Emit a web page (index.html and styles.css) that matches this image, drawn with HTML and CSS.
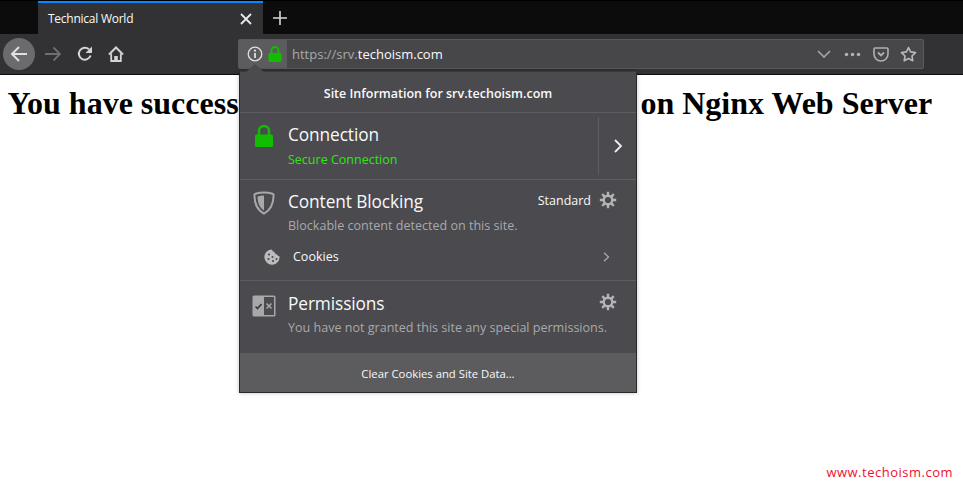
FILE: index.html
```html
<!DOCTYPE html>
<html lang="en">
<head>
<meta charset="utf-8">
<title>Technical World</title>
<link rel="stylesheet" href="styles.css">
</head>
<body>
<div class="browser">
  <header class="tabstrip">
    <div class="tab">
      <span class="tab-title">Technical World</span>
      <svg class="tab-close" width="14" height="14" viewBox="0 0 14 14"><path d="M2 2l10 10M12 2L2 12" stroke="#e8e8e8" stroke-width="1.8" fill="none"/></svg>
    </div>
    <svg class="newtab" width="16" height="16" viewBox="0 0 16 16"><path d="M8 1v14M1 8h14" stroke="#d8d8d8" stroke-width="1.6" fill="none"/></svg>
  </header>
  <nav class="toolbar">
    <div class="back">
      <svg width="20" height="20" viewBox="0 0 20 20"><path d="M18 10H3M10 3l-7 7 7 7" stroke="#e0e0e0" stroke-width="2" fill="none"/></svg>
    </div>
    <svg class="nav-icon forward" width="18" height="16" viewBox="0 0 18 16"><path d="M1 8h15M9.500 1.500L16 8l-6.500 6.500" stroke="#6f6f72" stroke-width="1.800" fill="none"/></svg>
    <svg class="nav-icon reload" width="16" height="16" viewBox="0 0 16 16"><path d="M13.600 9.500A6 6 0 1 1 12 3.300" stroke="#d4d4d5" stroke-width="2" fill="none"/><path d="M15 0.500v6.500h-6.500z" fill="#d4d4d5"/></svg>
    <svg class="nav-icon home" width="16" height="16" viewBox="0 0 16 16"><path d="M1 8.500l7-7 7 7" stroke="#d4d4d5" stroke-width="2" fill="none"/><path d="M3.200 7.500v7.500h9.600V7.500" stroke="#d4d4d5" stroke-width="1.800" fill="none"/><path d="M6.200 15v-5h3.600v5z" fill="#d4d4d5"/></svg>
    <div class="urlbar">
      <div class="identity">
        <svg width="16" height="16" viewBox="0 0 16 16"><circle cx="8" cy="8" r="6.800" stroke="#e0e0e0" stroke-width="1.300" fill="none"/><path d="M8 7v5" stroke="#e0e0e0" stroke-width="1.800"/><circle cx="8" cy="4.700" r="1.100" fill="#e0e0e0"/></svg>
        <svg width="14" height="16" viewBox="0 0 14 16"><path d="M3.500 7V4.500a3.500 3.500 0 0 1 7 0V7" stroke="#12bc00" stroke-width="2" fill="none"/><rect x="0.500" y="7" width="13" height="9" rx="1" fill="#12bc00"/></svg>
      </div>
      <div class="url"><span class="url-dim">https://srv.</span>techoism.com</div>
      <svg class="page-icon" width="14" height="8" viewBox="0 0 14 8"><path d="M1 1l6 6 6-6" stroke="#a3a3a4" stroke-width="1.700" fill="none"/></svg>
      <svg class="page-icon dots" width="17" height="5" viewBox="0 0 17 5"><circle cx="2.500" cy="2.500" r="1.800" fill="#b0b0b1"/><circle cx="8.500" cy="2.500" r="1.800" fill="#b0b0b1"/><circle cx="14.500" cy="2.500" r="1.800" fill="#b0b0b1"/></svg>
      <svg class="page-icon pocket" width="16" height="15" viewBox="0 0 16 15"><path d="M2 1h12a1 1 0 0 1 1 1v5a7 7 0 0 1-14 0V2a1 1 0 0 1 1-1z" stroke="#b0b0b1" stroke-width="1.600" fill="none"/><path d="M5 5.500l3 3 3-3" stroke="#b0b0b1" stroke-width="1.800" fill="none"/></svg>
      <svg class="page-icon star" width="17" height="16" viewBox="0 0 17 16"><path d="M8.500 1.500l2.100 4.400 4.900.7-3.500 3.400.8 4.800-4.300-2.300-4.300 2.300.8-4.800L1.500 6.600l4.900-.7z" stroke="#b8b8b9" stroke-width="1.600" fill="none" stroke-linejoin="round"/></svg>
    </div>
  </nav>
  <main class="content">
    <h1 class="headline">You have successfully enabled SSL Certificate on Nginx Web Server</h1>
    <div class="credit">www.techoism.com</div>
  </main>
</div>

<aside class="popup">
  <div class="popup-arrow"></div>
  <div class="popup-head">Site Information for srv.techoism.com</div>
  <section class="sec sec-conn">
    <div class="conn-main">
      <svg class="sec-icon" width="20" height="24" viewBox="0 0 20 24"><path d="M5 11V7a5 5 0 0 1 10 0v4" stroke="#12bc00" stroke-width="2.400" fill="none"/><rect x="1" y="10.500" width="18" height="12.500" rx="1.500" fill="#12bc00"/></svg>
      <div class="sec-text">
        <div class="sec-title">Connection</div>
        <div class="sec-green">Secure Connection</div>
      </div>
    </div>
    <div class="conn-more">
      <svg width="10" height="14" viewBox="0 0 10 14"><path d="M2 1l6 6-6 6" stroke="#eee" stroke-width="1.800" fill="none"/></svg>
    </div>
  </section>
  <section class="sec sec-block">
    <div class="row-top">
      <svg class="sec-icon" width="22" height="24" viewBox="0 0 22 24"><path d="M11 1.500c3.200 0 6.200.5 8.600 1.300.7.200 1 .6 1 1.300 0 8-2.100 14.600-9.600 18.600C3.500 18.700 1.400 12.100 1.400 4.100c0-.7.300-1.100 1-1.300 2.400-.8 5.400-1.300 8.600-1.300z" stroke="#a8a8a9" stroke-width="2" fill="none"/><path d="M11 4.500c-2 0-4.200.3-6.400 1 0 6 1.500 10.800 6.400 14z" fill="#a8a8a9"/></svg>
      <div class="sec-text grow">
        <div class="sec-title">Content Blocking</div>
        <div class="sec-sub">Blockable content detected on this site.</div>
      </div>
      <span class="standard">Standard</span>
      <svg class="gear" width="18" height="18" viewBox="0 0 18 18"><use href="#gear"/></svg>
    </div>
    <div class="cookies">
      <svg class="cookie-icon" width="16" height="16" viewBox="0 0 16 16"><path d="M8 .5c.3 1.500 1.300 2.500 2.500 2.600.2 1.400 1.300 2.400 2.700 2.400.2 1 1.200 1.700 2.300 1.700A7.600 7.600 0 1 1 8 .5z" fill="#bcbcbd"/><circle cx="5" cy="5.500" r="1.100" fill="#4a4a4f"/><circle cx="4.500" cy="10" r="1.100" fill="#4a4a4f"/><circle cx="8.500" cy="8" r="1" fill="#4a4a4f"/><circle cx="9" cy="12" r="1.100" fill="#4a4a4f"/><circle cx="12.500" cy="10" r="1" fill="#4a4a4f"/></svg>
      <span class="cookies-label">Cookies</span>
      <svg width="7" height="10" viewBox="0 0 7 10"><path d="M1 .8L5.500 5 1 9.200" stroke="#a8a8a9" stroke-width="1.300" fill="none"/></svg>
    </div>
  </section>
  <section class="sec sec-perm">
    <svg class="sec-icon perm-icon" width="24" height="22" viewBox="0 0 24 22"><rect x=".5" y=".5" width="23" height="21" rx="1.500" fill="#a8a8a9"/><rect x="12" y="2" width="10" height="18" fill="#4a4a4f"/><path d="M3.500 11.500l2 2 4-4.500" stroke="#3a3a3d" stroke-width="1.700" fill="none"/><path d="M14.500 8.500l5 5M19.500 8.500l-5 5" stroke="#a8a8a9" stroke-width="1.500" fill="none"/></svg>
    <div class="sec-text grow">
      <div class="sec-title">Permissions</div>
      <div class="sec-sub nowrap">You have not granted this site any special permissions.</div>
    </div>
    <svg class="gear" width="18" height="18" viewBox="0 0 18 18"><use href="#gear"/></svg>
  </section>
  <footer class="popup-foot">Clear Cookies and Site Data…</footer>
</aside>

<svg class="defs" width="0" height="0"><defs>
  <g id="gear" fill="none" stroke="#b4b4b5">
    <circle cx="9" cy="9" r="4.300" stroke-width="2.400"/>
    <path d="M9 .8v3.500M9 13.700v3.500M.8 9h3.500M13.700 9h3.500M3.200 3.200l2.500 2.500M12.300 12.300l2.500 2.500M14.800 3.200l-2.500 2.500M5.700 12.300l-2.500 2.500" stroke-width="2.400"/>
  </g>
</defs></svg>
</body>
</html>
```
FILE: styles.css
```css
* { box-sizing: border-box; }
html, body { margin: 0; padding: 0; height: 100%; background: #fff; overflow: hidden; }
body { font-family: "Open Sans", "Noto Sans", sans-serif; position: relative; }

.browser { display: flex; flex-direction: column; height: 487px; }

.tabstrip { height: 34px; background: #0c0c0d; border-top: 1px solid #000; display: flex; align-items: stretch; padding-left: 38px; flex: none; }
.tab { width: 225px; background: #323234; border-top: 2px solid #0a84ff; display: flex; align-items: center; padding: 0 10px 0 10px; }
.tab-title { flex: 1; color: #f9f9fa; font-size: 12px; letter-spacing: -.25px; }
.newtab { align-self: center; margin-left: 9px; }

.toolbar { height: 41px; background: #323234; border-bottom: 1px solid #0c0c0d; display: flex; align-items: center; padding: 0 39px 0 3px; flex: none; }
.back { width: 32px; height: 32px; border-radius: 50%; background: #6b6b6e; display: flex; align-items: center; justify-content: center; }
.nav-icon { flex: none; }
.forward { margin-left: 9px; }
.reload { margin-left: 15px; }
.home { margin-left: 15px; }

.urlbar { flex: 1; margin-left: 114px; height: 30px; background: #474749; border: 1px solid #5a5a5c; border-radius: 2px; display: flex; align-items: center; padding-right: 6px; }
.identity { width: 48px; height: 28px; background: #5c5c5f; display: flex; align-items: center; justify-content: center; gap: 5px; flex: none; padding-left: 3px; }
.url { flex: 1; font-size: 13px; color: #f9f9fa; padding-left: 5px; }
.url-dim { color: #a9a9ab; }
.page-icon { flex: none; }
.dots { margin-left: 13px; }
.pocket { margin-left: 12px; }
.star { margin-left: 11px; }

.content { flex: 1; padding: 9px 8px 8px 7.500px; position: relative; color: #000; }
.headline { margin: 0; font: bold 32px/38px "Liberation Serif", serif; white-space: nowrap; }
.credit { position: absolute; right: 10px; bottom: 6px; color: #f01030; font-size: 13px; letter-spacing: .5px; }

.popup { position: absolute; left: 239px; top: 71px; width: 398px; height: 322px; background: #4a4a4f; border: 1px solid #2a2a2c; border-top-color: #3a3a3d; color: #f9f9fa; box-shadow: 0 0 4px rgba(0,0,0,.25); display: flex; flex-direction: column; }
.popup-arrow { position: absolute; left: 6px; top: -8px; width: 18px; height: 8px; background: #4a4a4f; clip-path: polygon(50% 0, 100% 100%, 0 100%); }
.popup-head { height: 41px; display: flex; align-items: center; justify-content: center; font-size: 12.500px; font-weight: 600; border-bottom: 1px solid #5e5e62; flex: none; padding-top: 2px; }

.sec { border-bottom: 1px solid #5e5e62; flex: none; }
.sec-conn { height: 67px; display: flex; }
.conn-main { flex: 1; display: flex; padding: 11px 0 0 14px; gap: 14px; }
.conn-more { width: 38px; margin: 4px 0 4px; border-left: 1px solid #5e5e62; display: flex; align-items: center; justify-content: center; }
.sec-title { font-size: 17.300px; line-height: 22px; letter-spacing: -.1px; }
.sec-green { font-size: 12.500px; line-height: 16px; color: #30e60b; margin-top: 6px; }
.sec-sub { font-size: 12.550px; line-height: 16px; color: #a9a9ab; margin-top: 5px; }
.nowrap { white-space: nowrap; }
.sec-icon { flex: none; }
.grow { flex: 1; min-width: 0; }

.sec-block { height: 101px; }
.row-top { display: flex; padding: 11px 19px 0 13px; gap: 13px; }
.standard { font-size: 12.500px; line-height: 20px; margin-right: -5px; }
.gear { flex: none; }
.cookies { display: flex; align-items: center; margin-top: 14px; padding: 0 26px 0 24px; }
.cookies-label { flex: 1; font-size: 12.500px; margin-left: 13px; }

.sec-perm { height: 73px; display: flex; padding: 12px 19px 0 12px; gap: 12px; }
.perm-icon { margin-top: 2px; }
.popup-foot { flex: 1; background: #5c5c5f; display: flex; align-items: center; justify-content: center; font-size: 11.300px; }
.defs { position: absolute; }
```
